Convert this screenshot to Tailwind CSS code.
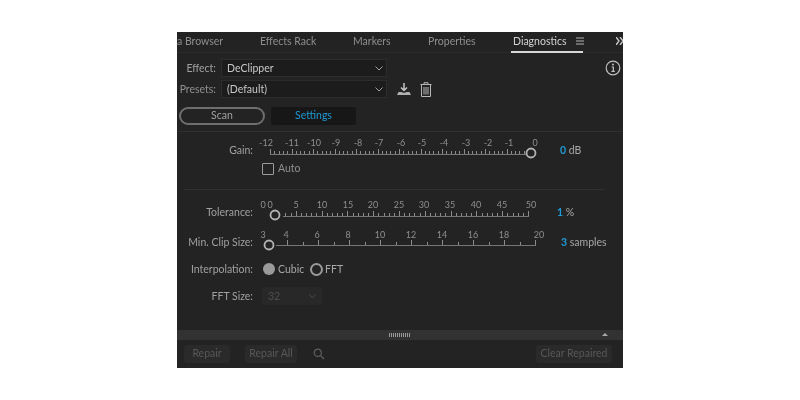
<!DOCTYPE html>
<html lang="en">
<head>
  <meta charset="UTF-8">
  <title>Diagnostics</title>
  <script src="https://cdn.jsdelivr.net/npm/@tailwindcss/browser@4"></script>
</head>
<body class="bg-white w-[800px] h-[400px] overflow-hidden flex justify-center pt-[32px] font-['Lato',sans-serif] text-[10.5px] text-[#a8a8a8]">

  <div class="w-[446px] h-[336px] bg-[#232323] flex flex-col overflow-hidden blur-[0.35px]">

    <!-- tabs -->
    <div class="h-[21px] shrink-0 flex items-start pt-[2px] leading-[14px] text-[#8e8e8e] border-b border-[#2b2b2b]">
      <span class="w-[83px] shrink-0 whitespace-nowrap">a Browser</span>
      <span class="w-[93px] shrink-0 whitespace-nowrap">Effects Rack</span>
      <span class="w-[75px] shrink-0 whitespace-nowrap">Markers</span>
      <span class="w-[83px] shrink-0 whitespace-nowrap">Properties</span>
      <div class="h-[21px] w-[72px] shrink-0 -mt-[2px] pt-[2px] pl-[2px] flex items-start gap-[10px] border-b-2 border-[#d8d8d8] text-[#d2d2d2]">
        <span class="whitespace-nowrap">Diagnostics</span>
        <svg width="8" height="8" viewBox="0 0 8 8" class="mt-[3px] shrink-0" stroke="#b5b5b5" stroke-width="1"><path d="M0 1h8M0 4h8M0 7h8"/></svg>
      </div>
      <svg width="8" height="8" viewBox="0 0 8 8" class="ml-[33px] mt-[3px] shrink-0" fill="none" stroke="#c8c8c8" stroke-width="1.4"><path d="M0 0l3 4-3 4M4 0l3 4-3 4"/></svg>
    </div>

    <!-- effect / presets -->
    <div class="mt-[6px] h-[18px] shrink-0 flex items-center">
      <span class="w-[39px] pt-[2px] shrink-0 text-right text-[#a0a0a0]">Effect:</span>
      <div class="ml-[5px] w-[166px] h-[18px] bg-[#1c1c1c] border border-[#2c2c2c] flex items-center justify-between pl-[5px] pr-[3px] text-[#c8c8c8]">
        <span class="pt-[2px]">DeClipper</span>
        <svg width="8" height="5" viewBox="0 0 8 5" fill="none" stroke="#a0a0a0"><path d="M.5.5L4 4 7.5.5"/></svg>
      </div>
      <svg width="16" height="16" viewBox="0 0 16 16" class="ml-[218px]" fill="none" stroke="#c0c0c0"><circle cx="8" cy="8" r="6.8" stroke-width="1.2"/><path d="M6.6 7h1.7v4M6.4 11.3h3.4" stroke-width="1.2"/><circle cx="8" cy="4.6" r="1" fill="#c0c0c0" stroke="none"/></svg>
    </div>
    <div class="mt-[3px] h-[18px] shrink-0 flex items-center">
      <span class="w-[39px] pt-[2px] shrink-0 text-right text-[#909090] whitespace-nowrap">Presets:</span>
      <div class="ml-[5px] w-[166px] h-[18px] bg-[#1c1c1c] border border-[#2c2c2c] flex items-center justify-between pl-[5px] pr-[3px] text-[#c8c8c8]">
        <span class="pt-[2px]">(Default)</span>
        <svg width="8" height="5" viewBox="0 0 8 5" fill="none" stroke="#a0a0a0"><path d="M.5.5L4 4 7.5.5"/></svg>
      </div>
      <svg width="16" height="14" viewBox="0 0 16 14" class="ml-[9px]"><path d="M8 1v7M5 5.5L8 8.5l3-3" fill="none" stroke="#c4c4c4" stroke-width="1.5"/><path d="M1 13l1.5-3h3L8 11l2.500-1h3l1.500 3z" fill="#b0b0b0"/></svg>
      <svg width="12" height="15" viewBox="0 0 12 15" class="ml-[8px]" fill="none" stroke="#b8b8b8"><path d="M.5 2.500h11M4 2.500V.7h4v1.800M1.500 2.500v12h9v-12M4 5v7.500M6 5v7.500M8 5v7.500"/></svg>
    </div>

    <!-- scan / settings -->
    <div class="mt-[9px] h-[18px] shrink-0 flex items-center pl-[2px] gap-[6px]">
      <div class="w-[86px] h-[18px] rounded-full border-2 border-[#6e6e6e] flex items-center justify-center text-[#a0a0a0]">Scan</div>
      <div class="w-[85px] h-[18px] bg-[#171717] rounded-[2px] flex items-center justify-center text-[#1f9ad6]">Settings</div>
    </div>

    <!-- settings body -->
    <div class="mt-[6px] flex-1 border-t border-[#303030] flex flex-col">
      <div class="mt-[8px] h-[20px] flex items-center shrink-0">
        <span class="w-[76px] pt-[2px] shrink-0 text-right text-[#a0a0a0]">Gain:</span>
        <div id="gain" class="relative ml-[5px] w-[287px] h-[20px] shrink-0"></div>
        <span class="ml-[15px] pt-[2px] whitespace-nowrap"><b class="font-bold text-[#1f9ad6]">0</b> dB</span>
      </div>
      <div class="mt-[3px] h-[12px] flex items-center pl-[85px] gap-[4px] shrink-0">
        <span class="w-[12px] h-[12px] border border-[#9c9c9c] rounded-[1px]"></span>
        <span class="text-[#8f8f8f]">Auto</span>
      </div>
      <div class="mt-[14px] ml-[7px] w-[420px] border-t border-[#303030] shrink-0"></div>

      <div class="mt-[12px] h-[20px] flex items-center shrink-0">
        <span class="w-[76px] pt-[2px] shrink-0 text-right text-[#a0a0a0]">Tolerance:</span>
        <div id="tolerance" class="relative ml-[5px] w-[287px] h-[20px] shrink-0"></div>
        <span class="ml-[12px] pt-[2px] whitespace-nowrap"><b class="font-bold text-[#1f9ad6]">1</b> %</span>
      </div>
      <div class="mt-[10px] h-[20px] flex items-center shrink-0">
        <span class="w-[76px] pt-[2px] shrink-0 text-right text-[#a0a0a0] whitespace-nowrap">Min. Clip Size:</span>
        <div id="clip" class="relative ml-[5px] w-[287px] h-[20px] shrink-0"></div>
        <span class="ml-[16px] pt-[2px] whitespace-nowrap"><b class="font-bold text-[#1f9ad6]">3</b> samples</span>
      </div>

      <div class="mt-[7px] h-[20px] flex items-center shrink-0">
        <span class="w-[76px] pt-[2px] shrink-0 text-right text-[#a0a0a0] whitespace-nowrap">Interpolation:</span>
        <span class="ml-[10px] w-[12px] h-[12px] rounded-full bg-[#9a9a9a]"></span>
        <span class="ml-[3px] pt-[2px] w-[32px] text-[#a8a8a8]">Cubic</span>
        <span class="w-[13px] h-[13px] rounded-full border-2 border-[#9a9a9a]"></span>
        <span class="ml-[2px] pt-[2px] text-[#a8a8a8]">FFT</span>
      </div>
      <div class="mt-[8px] h-[18px] flex items-center shrink-0">
        <span class="w-[76px] pt-[2px] shrink-0 text-right text-[#a0a0a0]">FFT Size:</span>
        <div class="ml-[9px] w-[60px] h-[18px] bg-[#282828] rounded-[2px] flex items-center justify-between pl-[6px] pr-[6px] text-[#4e4e4e]">
          <span class="pt-[2px]">32</span>
          <svg width="7" height="5" viewBox="0 0 7 5" fill="none" stroke="#4a4a4a"><path d="M.5.500L3.500 4l3-3.500"/></svg>
        </div>
      </div>
    </div>

    <!-- splitter -->
    <div class="h-[10px] shrink-0 bg-[#323232] relative flex items-center justify-center">
      <span class="w-[22px] h-[4px] bg-[repeating-linear-gradient(90deg,#9a9a9a_0,#9a9a9a_1px,transparent_1px,transparent_2px)]"></span>
      <svg width="6" height="3" viewBox="0 0 6 3" class="absolute right-[15px] top-[3px]"><path d="M0 3L3 0l3 3z" fill="#a8a8a8"/></svg>
    </div>

    <!-- footer -->
    <div class="h-[28px] shrink-0 flex items-center pl-[7px] pr-[11px] text-[#585858]">
      <span class="w-[46px] h-[18px] rounded-[3px] bg-[#2a2a2a] flex items-center justify-center">Repair</span>
      <span class="ml-[15px] w-[52px] h-[18px] rounded-[3px] bg-[#2a2a2a] flex items-center justify-center whitespace-nowrap">Repair All</span>
      <svg width="12" height="12" viewBox="0 0 12 12" class="ml-[16px]" fill="none" stroke="#5e5e5e" stroke-width="1.2"><circle cx="4.800" cy="4.800" r="3.600"/><path d="M7.500 7.500L11 11"/></svg>
      <span class="ml-auto w-[76px] h-[18px] rounded-[3px] bg-[#2a2a2a] flex items-center justify-center whitespace-nowrap">Clear Repaired</span>
    </div>
  </div>

  <script>
    // x values below are page coordinates; the ruler box starts at x = 258
    const ORIGIN = 258;

    function drawRuler(id, opts) {
      const box = document.getElementById(id);
      let d = "";
      opts.ticks.forEach(t => {
        d += `M${t.x - ORIGIN + 0.5} ${opts.base}v-${t.h} `;
      });
      box.innerHTML = `
        <svg width="287" height="20" viewBox="0 0 287 20" class="absolute left-0 top-0 overflow-visible" fill="none">
          <path d="${d}" stroke="#8c8c8c" stroke-width="1"/>
          <path d="M${opts.from - ORIGIN} ${opts.base + 0.5}H${opts.to - ORIGIN + 1}" stroke="#777777" stroke-width="1"/>
          <circle cx="${opts.knob - ORIGIN}" cy="${opts.knobY}" r="4.500" fill="#232323" stroke="#b4b4b4" stroke-width="1.800"/>
        </svg>`;
      opts.labels.forEach(([text, x]) => {
        const s = document.createElement("span");
        s.className = "absolute -top-[1px] -translate-x-1/2 text-[9px] leading-[7px] text-[#8f8f8f] whitespace-nowrap";
        s.style.left = (x - ORIGIN) + "px";
        s.textContent = text;
        box.appendChild(s);
      });
    }

    const gainTicks = [];
    for (let i = 0; i <= 60; i++) {
      gainTicks.push({ x: Math.round(270 + i * 4.3), h: i % 5 === 0 ? 5 : 3 });
    }
    drawRuler("gain", {
      ticks: gainTicks, from: 270, to: 526, base: 14, knob: 531, knobY: 13,
      labels: [["-12", 266], ["-11", 292], ["-10", 314], ["-9", 336], ["-8", 358], ["-7", 379], ["-6", 401], ["-5", 422], ["-4", 444], ["-3", 466], ["-2", 488], ["-1", 509], ["0", 535]]
    });

    const tolTicks = [];
    for (let i = 3; i <= 50; i++) {
      tolTicks.push({ x: Math.round(270 + i * 5.16), h: i % 5 === 0 ? 5 : 3 });
    }
    drawRuler("tolerance", {
      ticks: tolTicks, from: 283, to: 528, base: 14, knob: 275, knobY: 13,
      labels: [["0", 263], ["0", 270], ["5", 296], ["10", 322], ["15", 348], ["20", 373], ["25", 399], ["30", 424], ["35", 450], ["40", 476], ["45", 502], ["50", 531]]
    });

    const clipTicks = [];
    for (let i = 4; i <= 20; i++) {
      clipTicks.push({ x: Math.round(287 + (i - 4) * 15.5), h: i % 2 === 0 ? 5 : 3 });
    }
    drawRuler("clip", {
      ticks: clipTicks, from: 276, to: 535, base: 13, knob: 269, knobY: 13,
      labels: [["3", 263], ["4", 286], ["6", 317], ["8", 348], ["10", 380], ["12", 411], ["14", 442], ["16", 473], ["18", 504], ["20", 539]]
    });
  </script>
</body>
</html>
